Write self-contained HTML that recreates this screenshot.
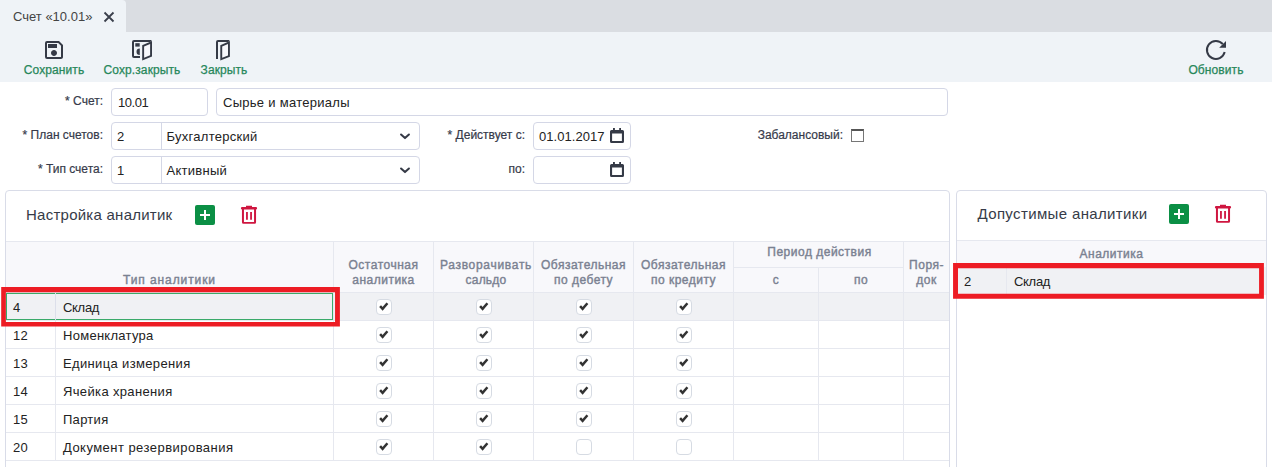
<!DOCTYPE html>
<html lang="ru">
<head>
<meta charset="utf-8">
<title>Счет «10.01»</title>
<style>
html,body{margin:0;padding:0;}
body{width:1272px;height:473px;overflow:hidden;background:#fff;position:relative;font-family:"Liberation Sans",sans-serif;font-size:13px;color:#333;}
.abs{position:absolute;}
.tabbar{left:0;top:0;width:1272px;height:32px;background:#dadde2;}
.tab{left:0;top:0;width:126px;height:32px;background:#eff3f7;border-top-right-radius:4px;}
.tab span{position:absolute;left:13px;top:9px;font-size:13px;color:#444;letter-spacing:0px;white-space:nowrap;}
.toolbar{left:0;top:32px;width:1272px;height:50px;background:#eff3f7;}
.tbtn{position:absolute;top:0;height:50px;text-align:center;}
.tbtn .lbl{position:absolute;top:31px;left:0;width:100%;font-size:12px;color:#27875a;white-space:nowrap;text-align:center;letter-spacing:0.1px;-webkit-text-stroke:0.25px #27875a;}
.tbtn svg{position:absolute;}
.lab{position:absolute;font-size:12px;color:#363a4a;text-align:right;white-space:nowrap;-webkit-text-stroke:0.2px #363a4a;}
.inp{position:absolute;box-sizing:border-box;height:28px;border:1px solid #d4d7e6;border-radius:4px;background:#fff;}
.inp .t{position:absolute;top:6px;font-size:13px;color:#222;white-space:nowrap;letter-spacing:0.28px;}
.inp .sep{position:absolute;top:0;width:1px;height:26px;background:#d4d7e6;}
.inp svg{position:absolute;}
.panel{position:absolute;box-sizing:border-box;border:1px solid #d9dce8;border-radius:4px;background:#fff;}
.ptitle{position:absolute;font-size:15px;color:#363b48;white-space:nowrap;letter-spacing:0.25px;}
.addbtn{position:absolute;width:20px;height:20px;border-radius:2px;background:#0b8f45;}
.addbtn:before{content:"";position:absolute;left:5px;top:9px;width:10px;height:2px;background:#fff;}
.addbtn:after{content:"";position:absolute;left:9px;top:5px;width:2px;height:10px;background:#fff;}
.grid{position:absolute;}
.hdr{position:absolute;background:#f8f8fb;}
.hl{position:absolute;background:#e6e8ef;}
.th{position:absolute;font-size:12px;font-weight:normal;color:#7a8191;-webkit-text-stroke:0.4px #7a8191;letter-spacing:0.5px;text-align:center;line-height:15px;white-space:nowrap;margin-top:1px;}
.row{position:absolute;left:0;height:28px;}
.row .c{position:absolute;top:7px;font-size:13px;color:#222;white-space:nowrap;letter-spacing:0.28px;}
.cb{position:absolute;box-sizing:border-box;width:16px;height:16px;border:1px solid #d6dbe3;border-radius:4px;background:#fff;}
.cb svg{position:absolute;left:-1px;top:-1px;}
.red{position:absolute;box-sizing:border-box;border:5px solid #ed1c24;}
</style>
</head>
<body>
<div class="abs tabbar"></div>
<div class="abs tab"><span>Счет «10.01»</span>
<svg class="abs" style="left:103px;top:11px" width="12" height="12" viewBox="0 0 12 12"><path d="M1.5 1.5 L10.5 10.5 M10.5 1.5 L1.5 10.5" stroke="#3a3f4b" stroke-width="1.8" fill="none"/></svg>
</div>
<div class="abs toolbar">
  <div class="tbtn" style="left:14px;width:80px">
    <svg style="left:28px;top:6px" width="24" height="24" viewBox="0 0 24 24"><path fill="#353a46" d="M17 3H5a2 2 0 0 0-2 2v14a2 2 0 0 0 2 2h14c1.1 0 2-.9 2-2V7l-4-4zm2 16H5V5h11.17L19 7.83V19zm-7-7c-1.66 0-3 1.34-3 3s1.34 3 3 3 3-1.34 3-3-1.34-3-3-3zM6 6h9v4H6z"/></svg>
    <div class="lbl">Сохранить</div></div>
  <div class="tbtn" style="left:96px;width:92px">
    <svg style="left:34px;top:6px" width="24" height="26" viewBox="0 0 24 26">
      <path d="M10 19H4a1 1 0 0 1-1-1V4a1 1 0 0 1 1-1h16.500a1 1 0 0 1 .5.500" fill="none" stroke="#353a46" stroke-width="2"/>
      <rect x="5.300" y="5.200" width="4.400" height="3.400" fill="#353a46"/>
      <path d="M9.800 10.450a3.300 3.300 0 0 0 0 6.600z" fill="#353a46"/>
      <path d="M12.200 7.200 L22 3.100 V18.500 L12.200 22.600 Z" fill="#353a46"/>
      <path d="M14.100 8.460 L20.100 5.940 V17.220 L14.100 19.740 Z" fill="#f7f8fc"/>
    </svg>
    <div class="lbl">Сохр.закрыть</div></div>
  <div class="tbtn" style="left:190px;width:68px">
    <svg style="left:24px;top:6px" width="24" height="26" viewBox="0 0 24 26">
      <path d="M3 20.900V4a1 1 0 0 1 1-1h10.400a1 1 0 0 1 .5.500" fill="none" stroke="#353a46" stroke-width="2"/>
      <path d="M6.300 7.200 L15.900 3 V18.800 L6.300 22.600 Z" fill="#353a46"/>
      <path d="M8.200 8.440 L14 5.900 V17.500 L8.200 19.800 Z" fill="#f7f8fc"/>
    </svg>
    <div class="lbl">Закрыть</div></div>
  <div class="tbtn" style="left:1178px;width:76px">
    <svg style="left:26px;top:5px" width="26" height="26" viewBox="0 0 26 26">
      <path d="M18.840 7.110 A9 9 0 1 0 20.680 15.080" fill="none" stroke="#353a46" stroke-width="2"/>
      <path d="M22 4 V10.700 H15.200 Z" fill="#353a46"/>
    </svg>
    <div class="lbl">Обновить</div></div>
</div>

<div class="lab" style="left:0;width:103px;top:94px">* Счет:</div>
<div class="inp" style="left:111px;top:88px;width:97px"><span class="t" style="left:6px;letter-spacing:-0.45px">10.01</span></div>
<div class="inp" style="left:216px;top:88px;width:732px"><span class="t" style="left:6px">Сырье и материалы</span></div>

<div class="lab" style="left:0;width:103px;top:128px">* План счетов:</div>
<div class="inp" style="left:111px;top:122px;width:309px"><span class="t" style="left:5px">2</span><div class="sep" style="left:49px"></div><span class="t" style="left:54.5px">Бухгалтерский</span>
<svg style="left:286px;top:9px" width="14" height="10" viewBox="0 0 14 10"><path d="M3.050 2.500 L7 6.100 L10.950 2.500" fill="none" stroke="#353a46" stroke-width="2" stroke-linecap="round" stroke-linejoin="round"/></svg></div>

<div class="lab" style="left:0;width:103px;top:162px">* Тип счета:</div>
<div class="inp" style="left:111px;top:156px;width:309px"><span class="t" style="left:5px">1</span><div class="sep" style="left:49px"></div><span class="t" style="left:54.5px">Активный</span>
<svg style="left:286px;top:9px" width="14" height="10" viewBox="0 0 14 10"><path d="M3.050 2.500 L7 6.100 L10.950 2.500" fill="none" stroke="#353a46" stroke-width="2" stroke-linecap="round" stroke-linejoin="round"/></svg></div>

<div class="lab" style="left:400px;width:125px;top:128px">* Действует с:</div>
<div class="inp" style="left:533px;top:122px;width:98px"><span class="t" style="left:5px;letter-spacing:0.05px">01.01.2017</span>
<svg style="left:76px;top:5px" width="14" height="15" viewBox="0 0 14 15"><path fill="#353a46" fill-rule="evenodd" d="M3 0h1.900v2h4.300V0H11v2h1.500A1.500 1.500 0 0 1 14 3.500v10A1.500 1.500 0 0 1 12.500 15h-11A1.500 1.500 0 0 1 0 13.500v-10A1.500 1.500 0 0 1 1.500 2H3zM2.100 5.500v7.400h9.800V5.500z"/></svg></div>
<div class="lab" style="left:400px;width:125px;top:162px">по:</div>
<div class="inp" style="left:533px;top:156px;width:98px">
<svg style="left:76px;top:5px" width="14" height="15" viewBox="0 0 14 15"><path fill="#353a46" fill-rule="evenodd" d="M3 0h1.900v2h4.300V0H11v2h1.500A1.500 1.500 0 0 1 14 3.500v10A1.500 1.500 0 0 1 12.500 15h-11A1.500 1.500 0 0 1 0 13.500v-10A1.500 1.500 0 0 1 1.500 2H3zM2.100 5.500v7.400h9.800V5.500z"/></svg></div>
<div class="lab" style="left:700px;width:143px;top:128px">Забалансовый:</div>
<div class="abs" style="left:851px;top:129px;width:13px;height:13px;box-sizing:border-box;border:1px solid #767676;border-top:2px solid #555;background:#fff"></div>

<!-- LEFT PANEL -->
<div class="panel" style="left:5px;top:190px;width:945px;height:300px">
  <span class="ptitle" style="left:20px;top:15px">Настройка аналитик</span>
  <div class="addbtn" style="left:189px;top:14px"></div>
  <svg class="abs" style="left:234px;top:14px" width="18" height="20" viewBox="0 0 18 20"><path fill="#cf1640" fill-rule="evenodd" d="M6 0.800h6v1.200h3.850a1.200 1.200 0 0 1 0 2.500H2.150a1.200 1.200 0 0 1 0-2.500H6zM1.950 4.500H16.050V17.300a1.500 1.500 0 0 1-1.500 1.500H3.450a1.500 1.500 0 0 1-1.500-1.500zM3.950 4.600V17H14.050V4.600zM6.050 7h1.800v7.800h-1.800zM10.150 7h1.800v7.800h-1.800z"/></svg>
</div>

<!-- RIGHT PANEL -->
<div class="panel" style="left:956px;top:190px;width:310.500px;height:300px">
  <span class="ptitle" style="left:20.500px;top:14px;letter-spacing:0.36px">Допустимые аналитики</span>
  <div class="addbtn" style="left:212px;top:13px"></div>
  <svg class="abs" style="left:257px;top:13px" width="18" height="20" viewBox="0 0 18 20"><path fill="#cf1640" fill-rule="evenodd" d="M6 0.800h6v1.200h3.850a1.200 1.200 0 0 1 0 2.500H2.150a1.200 1.200 0 0 1 0-2.500H6zM1.950 4.500H16.050V17.300a1.500 1.500 0 0 1-1.500 1.500H3.450a1.500 1.500 0 0 1-1.500-1.500zM3.950 4.600V17H14.050V4.600zM6.050 7h1.800v7.800h-1.800zM10.150 7h1.800v7.800h-1.800z"/></svg>
</div>
<!-- LEFT TABLE -->
<div class="hdr" style="left:6px;top:242px;width:943px;height:50px"></div>
<div class="hl" style="left:6px;top:241px;width:943px;height:1px"></div>
<div class="hl" style="left:6px;top:292px;width:943px;height:1px"></div>
<div class="hl" style="left:734px;top:267px;width:169px;height:1px"></div>
<div class="abs" style="left:6px;top:293px;width:943px;height:27px;background:#f0f1f4"></div>
<div class="hl" style="left:6px;top:320px;width:943px;height:1px"></div>
<div class="hl" style="left:6px;top:348px;width:943px;height:1px"></div>
<div class="hl" style="left:6px;top:376px;width:943px;height:1px"></div>
<div class="hl" style="left:6px;top:404px;width:943px;height:1px"></div>
<div class="hl" style="left:6px;top:432px;width:943px;height:1px"></div>
<div class="hl" style="left:6px;top:460px;width:943px;height:1px"></div>
<div class="hl" style="left:6px;top:488px;width:943px;height:1px"></div>
<div class="hl" style="left:55px;top:293px;width:1px;height:168px"></div>
<div class="hl" style="left:333px;top:242px;width:1px;height:219px"></div>
<div class="hl" style="left:433px;top:242px;width:1px;height:219px"></div>
<div class="hl" style="left:533px;top:242px;width:1px;height:219px"></div>
<div class="hl" style="left:633px;top:242px;width:1px;height:219px"></div>
<div class="hl" style="left:733px;top:242px;width:1px;height:219px"></div>
<div class="hl" style="left:903px;top:242px;width:1px;height:219px"></div>
<div class="hl" style="left:818px;top:268px;width:1px;height:193px"></div>
<div class="th" style="left:6px;width:327px;top:272px;letter-spacing:0.9px">Тип аналитики</div>
<div class="th" style="left:334px;width:99px;top:257px">Остаточная<br>аналитика</div>
<div class="th" style="left:436.500px;width:99px;top:257px;letter-spacing:0.7px">Разворачивать<br><span style="letter-spacing:0.2px">сальдо</span></div>
<div class="th" style="left:534px;width:99px;top:257px">Обязательная<br>по дебету</div>
<div class="th" style="left:634px;width:99px;top:257px">Обязательная<br>по кредиту</div>
<div class="th" style="left:735px;width:169px;top:244px">Период действия</div>
<div class="th" style="left:734px;width:84px;top:272px">с</div>
<div class="th" style="left:819px;width:84px;top:272px">по</div>
<div class="th" style="left:904px;width:45px;top:257px">Поря-<br>док</div>
<div class="row" style="top:293px"><span class="c" style="left:13px">4</span><span class="c" style="left:63px;letter-spacing:-0.3px">Склад</span>
<div class="cb" style="left:376px;top:6px"><svg width="16" height="16" viewBox="0 0 16 16"><path d="M4.100 7.200 L6.600 9.900 L11.400 4.300" fill="none" stroke="#333" stroke-width="2.500"/></svg></div>
<div class="cb" style="left:476px;top:6px"><svg width="16" height="16" viewBox="0 0 16 16"><path d="M4.100 7.200 L6.600 9.900 L11.400 4.300" fill="none" stroke="#333" stroke-width="2.500"/></svg></div>
<div class="cb" style="left:576px;top:6px"><svg width="16" height="16" viewBox="0 0 16 16"><path d="M4.100 7.200 L6.600 9.900 L11.400 4.300" fill="none" stroke="#333" stroke-width="2.500"/></svg></div>
<div class="cb" style="left:676px;top:6px"><svg width="16" height="16" viewBox="0 0 16 16"><path d="M4.100 7.200 L6.600 9.900 L11.400 4.300" fill="none" stroke="#333" stroke-width="2.500"/></svg></div>
</div>
<div class="row" style="top:321px"><span class="c" style="left:13px">12</span><span class="c" style="left:63px">Номенклатура</span>
<div class="cb" style="left:376px;top:6px"><svg width="16" height="16" viewBox="0 0 16 16"><path d="M4.100 7.200 L6.600 9.900 L11.400 4.300" fill="none" stroke="#333" stroke-width="2.500"/></svg></div>
<div class="cb" style="left:476px;top:6px"><svg width="16" height="16" viewBox="0 0 16 16"><path d="M4.100 7.200 L6.600 9.900 L11.400 4.300" fill="none" stroke="#333" stroke-width="2.500"/></svg></div>
<div class="cb" style="left:576px;top:6px"><svg width="16" height="16" viewBox="0 0 16 16"><path d="M4.100 7.200 L6.600 9.900 L11.400 4.300" fill="none" stroke="#333" stroke-width="2.500"/></svg></div>
<div class="cb" style="left:676px;top:6px"><svg width="16" height="16" viewBox="0 0 16 16"><path d="M4.100 7.200 L6.600 9.900 L11.400 4.300" fill="none" stroke="#333" stroke-width="2.500"/></svg></div>
</div>
<div class="row" style="top:349px"><span class="c" style="left:13px">13</span><span class="c" style="left:63px;letter-spacing:0.35px">Единица измерения</span>
<div class="cb" style="left:376px;top:6px"><svg width="16" height="16" viewBox="0 0 16 16"><path d="M4.100 7.200 L6.600 9.900 L11.400 4.300" fill="none" stroke="#333" stroke-width="2.500"/></svg></div>
<div class="cb" style="left:476px;top:6px"><svg width="16" height="16" viewBox="0 0 16 16"><path d="M4.100 7.200 L6.600 9.900 L11.400 4.300" fill="none" stroke="#333" stroke-width="2.500"/></svg></div>
<div class="cb" style="left:576px;top:6px"><svg width="16" height="16" viewBox="0 0 16 16"><path d="M4.100 7.200 L6.600 9.900 L11.400 4.300" fill="none" stroke="#333" stroke-width="2.500"/></svg></div>
<div class="cb" style="left:676px;top:6px"><svg width="16" height="16" viewBox="0 0 16 16"><path d="M4.100 7.200 L6.600 9.900 L11.400 4.300" fill="none" stroke="#333" stroke-width="2.500"/></svg></div>
</div>
<div class="row" style="top:377px"><span class="c" style="left:13px">14</span><span class="c" style="left:63px;letter-spacing:0.35px">Ячейка хранения</span>
<div class="cb" style="left:376px;top:6px"><svg width="16" height="16" viewBox="0 0 16 16"><path d="M4.100 7.200 L6.600 9.900 L11.400 4.300" fill="none" stroke="#333" stroke-width="2.500"/></svg></div>
<div class="cb" style="left:476px;top:6px"><svg width="16" height="16" viewBox="0 0 16 16"><path d="M4.100 7.200 L6.600 9.900 L11.400 4.300" fill="none" stroke="#333" stroke-width="2.500"/></svg></div>
<div class="cb" style="left:576px;top:6px"><svg width="16" height="16" viewBox="0 0 16 16"><path d="M4.100 7.200 L6.600 9.900 L11.400 4.300" fill="none" stroke="#333" stroke-width="2.500"/></svg></div>
<div class="cb" style="left:676px;top:6px"><svg width="16" height="16" viewBox="0 0 16 16"><path d="M4.100 7.200 L6.600 9.900 L11.400 4.300" fill="none" stroke="#333" stroke-width="2.500"/></svg></div>
</div>
<div class="row" style="top:405px"><span class="c" style="left:13px">15</span><span class="c" style="left:63px">Партия</span>
<div class="cb" style="left:376px;top:6px"><svg width="16" height="16" viewBox="0 0 16 16"><path d="M4.100 7.200 L6.600 9.900 L11.400 4.300" fill="none" stroke="#333" stroke-width="2.500"/></svg></div>
<div class="cb" style="left:476px;top:6px"><svg width="16" height="16" viewBox="0 0 16 16"><path d="M4.100 7.200 L6.600 9.900 L11.400 4.300" fill="none" stroke="#333" stroke-width="2.500"/></svg></div>
<div class="cb" style="left:576px;top:6px"><svg width="16" height="16" viewBox="0 0 16 16"><path d="M4.100 7.200 L6.600 9.900 L11.400 4.300" fill="none" stroke="#333" stroke-width="2.500"/></svg></div>
<div class="cb" style="left:676px;top:6px"><svg width="16" height="16" viewBox="0 0 16 16"><path d="M4.100 7.200 L6.600 9.900 L11.400 4.300" fill="none" stroke="#333" stroke-width="2.500"/></svg></div>
</div>
<div class="row" style="top:433px"><span class="c" style="left:13px">20</span><span class="c" style="left:63px;letter-spacing:0.46px">Документ резервирования</span>
<div class="cb" style="left:376px;top:6px"><svg width="16" height="16" viewBox="0 0 16 16"><path d="M4.100 7.200 L6.600 9.900 L11.400 4.300" fill="none" stroke="#333" stroke-width="2.500"/></svg></div>
<div class="cb" style="left:476px;top:6px"><svg width="16" height="16" viewBox="0 0 16 16"><path d="M4.100 7.200 L6.600 9.900 L11.400 4.300" fill="none" stroke="#333" stroke-width="2.500"/></svg></div>
<div class="cb" style="left:576px;top:6px"></div>
<div class="cb" style="left:676px;top:6px"></div>
</div>
<div class="abs" style="left:6px;top:293px;width:327px;height:27px;box-sizing:border-box;border:1px solid #3aaa6a"></div>
<div class="hl" style="left:55px;top:293px;width:1px;height:28px;background:#dcdfea"></div>

<!-- RIGHT TABLE -->
<div class="hdr" style="left:957px;top:241px;width:309px;height:26px"></div>
<div class="hl" style="left:957px;top:240px;width:309px;height:1px"></div>
<div class="abs" style="left:957px;top:267px;width:309px;height:28px;background:#f0f1f4"></div>
<div class="hl" style="left:1006px;top:267px;width:1px;height:28px"></div>
<div class="th" style="left:957px;width:309px;top:246px">Аналитика</div>
<div class="row" style="top:267px"><span class="c" style="left:964px">2</span><span class="c" style="left:1014px;letter-spacing:-0.3px">Склад</span></div>

<svg class="abs" style="left:0;top:0" width="1272" height="473" viewBox="0 0 1272 473"><path fill="#ed1c24" fill-rule="evenodd" d="M1.200 287.100H339.900V326.600H1.200ZM5.850 292.300H335.040V322H5.850ZM953.060 263.060H1263.900V298.700H953.060ZM958 268.200H1259.070V293.800H958Z"/></svg>
<div class="abs" style="left:0;top:467px;width:1272px;height:6px;background:#fff"></div>
</body>
</html>
